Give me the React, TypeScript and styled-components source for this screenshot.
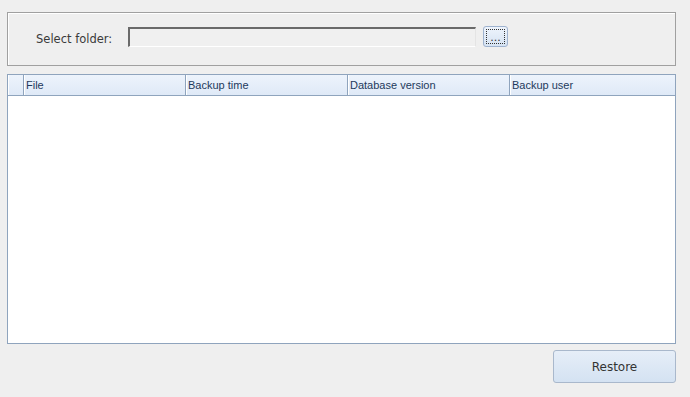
import styled, { createGlobalStyle } from 'styled-components';

const GlobalStyle = createGlobalStyle`
  html, body {
    margin: 0;
    padding: 0;
    background: #efefef;
  }
  body {
    font-family: 'DejaVu Sans', 'Liberation Sans', sans-serif;
    font-size: 11px;
    color: #333;
  }
`;

const Window = styled.div`
  width: 690px;
  height: 397px;
  box-sizing: border-box;
  padding: 12px 14px 0 7px;
  display: flex;
  flex-direction: column;
`;

const GroupBox = styled.div`
  height: 54px;
  box-sizing: border-box;
  border: 1px solid #a0a0a0;
  box-shadow: inset 1px 1px 0 #ffffff;
  display: flex;
  align-items: center;
  padding: 0 0 0 28px;
`;

const Label = styled.span`
  width: 92px;
  color: #3a3a3a;
  font-size: 11.5px;
  margin-top: -1px;
`;

const PathInput = styled.div`
  width: 348px;
  height: 20px;
  box-sizing: border-box;
  border-top: 2px solid #6a6a6a;
  border-left: 2px solid #6a6a6a;
  border-right: 1px solid #e4e4e4;
  border-bottom: 1px solid #ffffff;
  background: #f0f0f0;
  margin-top: -5px;
`;

const BrowseButton = styled.button`
  width: 25px;
  height: 21px;
  margin: -6px 0 0 7px;
  padding: 2px;
  box-sizing: border-box;
  border: 1px solid #9fb3cf;
  border-radius: 3px;
  background: linear-gradient(#eef4fc, #d6e3f3);
  font-family: inherit;
  font-size: 11px;
  color: #333;
  display: flex;
`;

const FocusRect = styled.span`
  flex: 1;
  border: 1px dotted #333;
  display: flex;
  align-items: flex-end;
  justify-content: center;
  line-height: 10px;
`;

const Grid = styled.div`
  margin-top: 8px;
  height: 270px;
  box-sizing: border-box;
  border: 1px solid #8fa4bd;
  background: #ffffff;
  display: flex;
  flex-direction: column;
`;

const HeaderRow = styled.div`
  height: 20px;
  display: grid;
  grid-template-columns: 15px 162px 162px 162px 1fr;
  background: linear-gradient(#edf3fc, #dfe9f7);
  border-bottom: 1px solid #8fa4bd;
`;

const HeaderCell = styled.div<{ $first?: boolean }>`
  border-left: ${(p) => (p.$first ? 'none' : '1px solid #8fa4bd')};
  box-shadow: inset 1px 0 0 #ffffff;
  padding-left: 2px;
  display: flex;
  align-items: center;
  color: #1e3a5c;
  font-family: 'Liberation Sans', Arial, sans-serif;
  font-size: 11px;
  white-space: nowrap;
`;

const Footer = styled.div`
  display: flex;
  justify-content: flex-end;
  padding-top: 6px;
`;

const RestoreButton = styled.button`
  width: 123px;
  height: 33px;
  margin-right: 0;
  border: 1px solid #a9b8cc;
  border-radius: 3px;
  background: linear-gradient(#e6eef8, #d4e2f2);
  font-family: inherit;
  font-size: 12px;
  color: #333;
`;

const columns = ['File', 'Backup time', 'Database version', 'Backup user'];

export default function App() {
  return (
    <>
      <GlobalStyle />
      <Window>
        <GroupBox>
          <Label>Select folder:</Label>
          <PathInput />
          <BrowseButton>
            <FocusRect>...</FocusRect>
          </BrowseButton>
        </GroupBox>
        <Grid>
          <HeaderRow>
            <HeaderCell $first />
            {columns.map((c) => (
              <HeaderCell key={c}>{c}</HeaderCell>
            ))}
          </HeaderRow>
        </Grid>
        <Footer>
          <RestoreButton>Restore</RestoreButton>
        </Footer>
      </Window>
    </>
  );
}
